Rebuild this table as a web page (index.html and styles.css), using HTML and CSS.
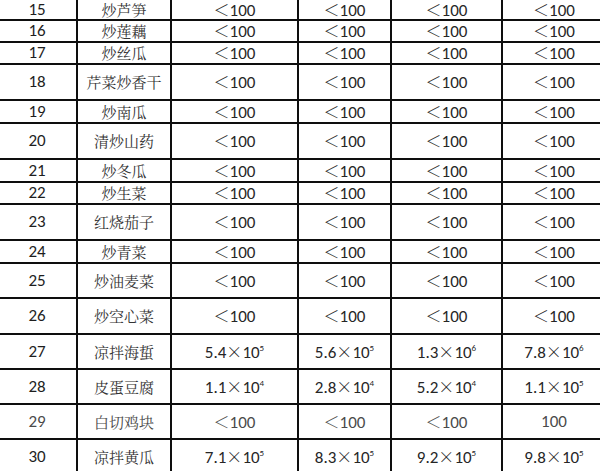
FILE: index.html
```html
<!DOCTYPE html>
<html lang="zh">
<head>
<meta charset="utf-8">
<link rel="stylesheet" href="styles.css">
</head>
<body>
<table class="data">
<colgroup>
<col class="c1"><col class="c2"><col class="c3"><col class="c4"><col class="c5"><col class="c6">
</colgroup>
<tbody>
<tr class="first"><td class="num">15</td><td class="zh">炒芦笋</td><td><span class="lt">＜</span>100</td><td><span class="lt">＜</span>100</td><td><span class="lt">＜</span>100</td><td><span class="lt">＜</span>100</td></tr>
<tr class="h22"><td class="num">16</td><td class="zh">炒莲藕</td><td><span class="lt">＜</span>100</td><td><span class="lt">＜</span>100</td><td><span class="lt">＜</span>100</td><td><span class="lt">＜</span>100</td></tr>
<tr class="h22"><td class="num">17</td><td class="zh">炒丝瓜</td><td><span class="lt">＜</span>100</td><td><span class="lt">＜</span>100</td><td><span class="lt">＜</span>100</td><td><span class="lt">＜</span>100</td></tr>
<tr class="h36"><td class="num">18</td><td class="zh">芹菜炒香干</td><td><span class="lt">＜</span>100</td><td><span class="lt">＜</span>100</td><td><span class="lt">＜</span>100</td><td><span class="lt">＜</span>100</td></tr>
<tr class="h23"><td class="num">19</td><td class="zh">炒南瓜</td><td><span class="lt">＜</span>100</td><td><span class="lt">＜</span>100</td><td><span class="lt">＜</span>100</td><td><span class="lt">＜</span>100</td></tr>
<tr class="h36"><td class="num">20</td><td class="zh">清炒山药</td><td><span class="lt">＜</span>100</td><td><span class="lt">＜</span>100</td><td><span class="lt">＜</span>100</td><td><span class="lt">＜</span>100</td></tr>
<tr class="h23"><td class="num">21</td><td class="zh">炒冬瓜</td><td><span class="lt">＜</span>100</td><td><span class="lt">＜</span>100</td><td><span class="lt">＜</span>100</td><td><span class="lt">＜</span>100</td></tr>
<tr class="h22"><td class="num">22</td><td class="zh">炒生菜</td><td><span class="lt">＜</span>100</td><td><span class="lt">＜</span>100</td><td><span class="lt">＜</span>100</td><td><span class="lt">＜</span>100</td></tr>
<tr class="h36"><td class="num">23</td><td class="zh">红烧茄子</td><td><span class="lt">＜</span>100</td><td><span class="lt">＜</span>100</td><td><span class="lt">＜</span>100</td><td><span class="lt">＜</span>100</td></tr>
<tr class="h23"><td class="num">24</td><td class="zh">炒青菜</td><td><span class="lt">＜</span>100</td><td><span class="lt">＜</span>100</td><td><span class="lt">＜</span>100</td><td><span class="lt">＜</span>100</td></tr>
<tr class="h35"><td class="num">25</td><td class="zh">炒油麦菜</td><td><span class="lt">＜</span>100</td><td><span class="lt">＜</span>100</td><td><span class="lt">＜</span>100</td><td><span class="lt">＜</span>100</td></tr>
<tr class="h36"><td class="num">26</td><td class="zh">炒空心菜</td><td><span class="lt">＜</span>100</td><td><span class="lt">＜</span>100</td><td><span class="lt">＜</span>100</td><td><span class="lt">＜</span>100</td></tr>
<tr class="h35"><td class="num">27</td><td class="zh">凉拌海蜇</td><td>5.4<span class="x">×</span>10<sup>5</sup></td><td>5.6<span class="x">×</span>10<sup>5</sup></td><td>1.3<span class="x">×</span>10<sup>6</sup></td><td>7.8<span class="x">×</span>10<sup>6</sup></td></tr>
<tr class="h35"><td class="num">28</td><td class="zh">皮蛋豆腐</td><td>1.1<span class="x">×</span>10<sup>4</sup></td><td>2.8<span class="x">×</span>10<sup>4</sup></td><td>5.2<span class="x">×</span>10<sup>4</sup></td><td>1.1<span class="x">×</span>10<sup>5</sup></td></tr>
<tr class="h35 faded"><td class="num">29</td><td class="zh">白切鸡块</td><td><span class="lt">＜</span>100</td><td><span class="lt">＜</span>100</td><td><span class="lt">＜</span>100</td><td>100</td></tr>
<tr class="h35"><td class="num">30</td><td class="zh">凉拌黄瓜</td><td>7.1<span class="x">×</span>10<sup>5</sup></td><td>8.3<span class="x">×</span>10<sup>5</sup></td><td>9.2<span class="x">×</span>10<sup>5</sup></td><td>9.8<span class="x">×</span>10<sup>5</sup></td></tr>
</tbody>
</table>
</body>
</html>
```
FILE: styles.css
```css
html, body {
  margin: 0;
  padding: 0;
  background: #ffffff;
  overflow: hidden;
}

.data {
  border-collapse: collapse;
  table-layout: fixed;
  width: 609px;
  margin: -3px 0 0 -4px;
  font-family: "Carlito", "Liberation Sans", "Noto Sans CJK SC", sans-serif;
  font-size: 17px;
  color: #262626;
}

.c1 { width: 80px; }
.c2 { width: 94px; }
.c3 { width: 127px; }
.c4 { width: 93px; }
.c5 { width: 111px; }
.c6 { width: 104px; }

.data td {
  border: 2px solid #0e0e0e;
  padding: 0;
  text-align: center;
  vertical-align: middle;
  line-height: 14px;
  white-space: nowrap;
}

.first { height: 22px; }
.first td {
  padding-top: 2px;
}

.h22 { height: 22px; }
.h23 { height: 23px; }
.h35 { height: 35px; }
.h36 { height: 36px; }

.num {
  color: #1e1e1e;
}

.zh {
  font-family: "Noto Serif CJK SC", "Noto Sans CJK SC", serif;
  font-size: 15px;
  font-weight: 400;
  color: #333333;
}

.lt,
.x {
  display: inline-block;
  height: 14px;
  line-height: 14px;
  font-family: "Noto Sans CJK SC", sans-serif;
  font-weight: 300;
  font-size: 16px;
}

sup {
  font-size: 9px;
  line-height: 0;
  vertical-align: 7px;
}

.faded td {
  color: #4a4a4a;
}
```
